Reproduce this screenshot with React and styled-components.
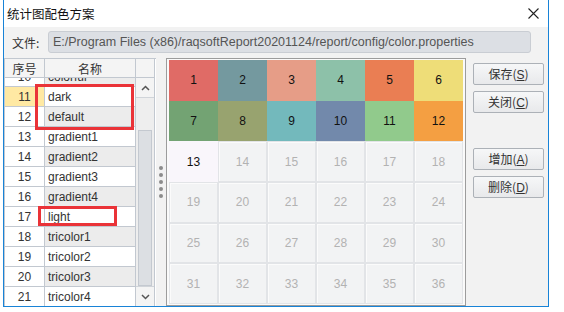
import React from 'react';
import styled, { createGlobalStyle } from 'styled-components';

const GlobalStyle = createGlobalStyle`
  body {
    margin: 0;
    background: #ffffff;
    font-family: "Liberation Sans", "Noto Sans CJK SC", sans-serif;
    font-size: 12px;
    color: #222;
  }
`;

const Window = styled.div`
  position: relative;
  margin-left: 3px;
  width: 546px;
  height: 307px;
  box-sizing: border-box;
  border: 1px solid #1883d7;
  border-top: none;
  display: flex;
  flex-direction: column;
  background: #f2f2f2;
  overflow: hidden;
`;
const TitleBar = styled.div`
  height: 27px;
  flex-shrink: 0;
  display: flex;
  align-items: center;
  justify-content: space-between;
  padding: 0 9px 0 3px;
  background: #ffffff;
`;
const Title = styled.span`
  font-family: "Noto Sans CJK SC", sans-serif;
  font-size: 12.5px;
  color: #111;
`;
const FileRow = styled.div`
  display: flex;
  align-items: center;
  height: 22px;
  margin-top: 4px;
`;
const FileLabel = styled.span`
  width: 44px;
  padding-left: 8px;
  box-sizing: border-box;
  font-family: "Noto Sans CJK SC", sans-serif;
  color: #333;
`;
const PathBox = styled.div`
  width: 483px;
  height: 22px;
  box-sizing: border-box;
  border: 1px solid #c9cdd3;
  border-radius: 3px;
  background: #dcdfe4;
  color: #555;
  font-size: 12.5px;
  padding-left: 4px;
  line-height: 20px;
  white-space: nowrap;
  overflow: hidden;
`;
const Main = styled.div`
  flex: 1;
  min-height: 0;
  display: flex;
  margin-top: 5px;
`;
const Table = styled.div`
  width: 151px;
  display: flex;
  flex-direction: column;
  border-top: 1px solid #c2c8d0;
  border-left: 1px solid #c2c8d0;
  background: #fff;
`;
const HeaderRow = styled.div`
  display: grid;
  grid-template-columns: 40px 91px 19px;
  height: 19px;
  flex-shrink: 0;
  position: relative;
  z-index: 1;
`;
const HeadCell = styled.div`
  box-sizing: border-box;
  border-right: 1px solid #c2c8d0;
  border-bottom: 1px solid #c2c8d0;
  background: #f4f4f4;
  display: flex;
  align-items: center;
  justify-content: center;
  font-family: "Noto Sans CJK SC", sans-serif;
  color: #333;
`;
const TableBody = styled.div`
  flex: 1;
  min-height: 0;
  display: flex;
`;
const RowsViewport = styled.div`
  width: 131px;
  overflow: hidden;
`;
const RowsScroll = styled.div`
  margin-top: -11px;
`;
const Row = styled.div`
  display: grid;
  grid-template-columns: 40px 91px;
  height: 20px;
`;
const Cell = styled.div`
  box-sizing: border-box;
  border-right: 1px solid #c2c8d0;
  border-bottom: 1px solid #c2c8d0;
  display: flex;
  align-items: center;
  justify-content: ${p => (p.$index ? 'center' : 'flex-start')};
  padding-left: ${p => (p.$index ? '0' : '3px')};
  background: ${p => p.$bg || '#fff'};
  color: #333;
  font-size: 12px;
`;
const ScrollBar = styled.div`
  width: 19px;
  display: flex;
  flex-direction: column;
  background: #eeeeee;
  border-right: 1px solid #c2c8d0;
  box-sizing: border-box;
`;
const ScrollButton = styled.div`
  height: 20px;
  flex-shrink: 0;
  display: flex;
  align-items: center;
  justify-content: center;
  background: #f4f4f4;
  border-bottom: ${p => (p.$down ? 'none' : '1px solid #d0d4d9')};
  border-top: ${p => (p.$down ? '1px solid #d0d4d9' : 'none')};
  box-sizing: border-box;
`;
const Track = styled.div`
  flex: 1;
  display: flex;
  flex-direction: column;
  justify-content: flex-end;
  padding: 0 2px;
`;
const Thumb = styled.div`
  height: 156px;
  box-sizing: border-box;
  border: 1px solid #c4c9d0;
  background: #dcdfe3;
`;
const Splitter = styled.div`
  width: 10px;
  display: flex;
  flex-direction: column;
  align-items: center;
  justify-content: center;
  gap: 3px;
`;
const Dot = styled.span`
  width: 4px;
  height: 4px;
  border-radius: 50%;
  background: #8c8c8c;
`;
const Panel = styled.div`
  width: 300px;
  box-sizing: border-box;
  border: 1px solid #9c9c9c;
  padding: 1px 2px 1px 2px;
  background: #fafafa;
  display: grid;
  grid-template-columns: repeat(6, 49px);
  grid-template-rows: repeat(6, 1fr);
`;
const ColorCell = styled.div`
  box-sizing: border-box;
  display: flex;
  align-items: center;
  justify-content: center;
  font-size: 12px;
  background: ${p => p.$bg || '#f2f3f4'};
  color: ${p => (p.$bg ? '#111' : '#b2b2b2')};
  border: ${p => (p.$empty ? '1px solid #e2e4e7' : 'none')};
  box-shadow: ${p => (p.$empty ? 'inset 1px 1px 0 #fbfbfb' : 'none')};
`;
const Buttons = styled.div`
  margin-left: 7px;
  padding-top: 5px;
  display: flex;
  flex-direction: column;
  gap: 6px;
`;
const Spacer = styled.div`
  height: 23px;
`;
const Button = styled.button`
  width: 71px;
  height: 22px;
  box-sizing: border-box;
  border: 1px solid #acb1b7;
  border-radius: 2px;
  background: linear-gradient(#f6f7f8, #e8e9eb);
  font-family: "Noto Sans CJK SC", sans-serif;
  font-size: 12px;
  color: #333;
  padding: 0;
  line-height: 20px;
  & u {
    font-family: "Liberation Sans", sans-serif;
  }
`;
const Mark = styled.div`
  position: absolute;
  left: ${p => p.$x}px;
  top: ${p => p.$y}px;
  width: ${p => p.$w}px;
  height: ${p => p.$h}px;
  box-sizing: border-box;
  border: 3px solid #ea3338;
  pointer-events: none;
`;

const rows = [
  [10, 'colorful'],
  [11, 'dark'],
  [12, 'default'],
  [13, 'gradient1'],
  [14, 'gradient2'],
  [15, 'gradient3'],
  [16, 'gradient4'],
  [17, 'light'],
  [18, 'tricolor1'],
  [19, 'tricolor2'],
  [20, 'tricolor3'],
  [21, 'tricolor4'],
];

const palette = [
  '#e06b66', '#74999f', '#e69d87', '#8dc1a9', '#ea7e53', '#eedd78',
  '#73a373', '#98a36f', '#73b9bc', '#7289ab', '#91ca8c', '#f49f42',
];

const Close = () => (
  <svg width="11" height="11" viewBox="0 0 11 11">
    <path d="M0.5 0.5L10.5 10.5M10.5 0.5L0.5 10.5" stroke="#222" strokeWidth="1.1" fill="none" />
  </svg>
);

const Caret = ({ down }) => (
  <svg width="9" height="6" viewBox="0 0 9 6">
    <path d={down ? 'M1 1L4.5 4.5L8 1' : 'M1 5L4.5 1.5L8 5'} stroke="#555" strokeWidth="1.5" fill="none" />
  </svg>
);

const App = () => {
  return (
    <>
      <GlobalStyle />
      <Window>
        <TitleBar>
          <Title>统计图配色方案</Title>
          <Close />
        </TitleBar>
        <FileRow>
          <FileLabel>文件:</FileLabel>
          <PathBox>E:/Program Files (x86)/raqsoftReport20201124/report/config/color.properties</PathBox>
        </FileRow>
        <Main>
          <Table>
            <HeaderRow>
              <HeadCell>序号</HeadCell>
              <HeadCell>名称</HeadCell>
              <HeadCell />
            </HeaderRow>
            <TableBody>
              <RowsViewport>
                <RowsScroll>
                  {rows.map(([n, name]) => (
                    <Row key={n}>
                      <Cell $index $bg={n === 11 ? '#ffe9a3' : '#fff'}>{n}</Cell>
                      <Cell $bg={n % 2 === 0 ? '#ececec' : '#fff'}>{name}</Cell>
                    </Row>
                  ))}
                </RowsScroll>
              </RowsViewport>
              <ScrollBar>
                <ScrollButton><Caret /></ScrollButton>
                <Track><Thumb /></Track>
                <ScrollButton $down><Caret down /></ScrollButton>
              </ScrollBar>
            </TableBody>
          </Table>
          <Splitter>
            {[0, 1, 2, 3, 4].map(i => <Dot key={i} />)}
          </Splitter>
          <Panel>
            {Array.from({ length: 36 }, (_, i) => {
              const n = i + 1;
              if (n <= 12) return <ColorCell key={n} $bg={palette[i]}>{n}</ColorCell>;
              if (n === 13) return <ColorCell key={n} $bg="#f9f6fb">{n}</ColorCell>;
              return <ColorCell key={n} $empty>{n}</ColorCell>;
            })}
          </Panel>
          <Buttons>
            <Button>保存(<u>S</u>)</Button>
            <Button>关闭(<u>C</u>)</Button>
            <Spacer />
            <Button>增加(<u>A</u>)</Button>
            <Button>删除(<u>D</u>)</Button>
          </Buttons>
        </Main>
        <Mark $x={31} $y={84} $w={99} $h={46} />
        <Mark $x={34} $y={206} $w={79} $h={20} />
      </Window>
    </>
  );
};

export default App;
